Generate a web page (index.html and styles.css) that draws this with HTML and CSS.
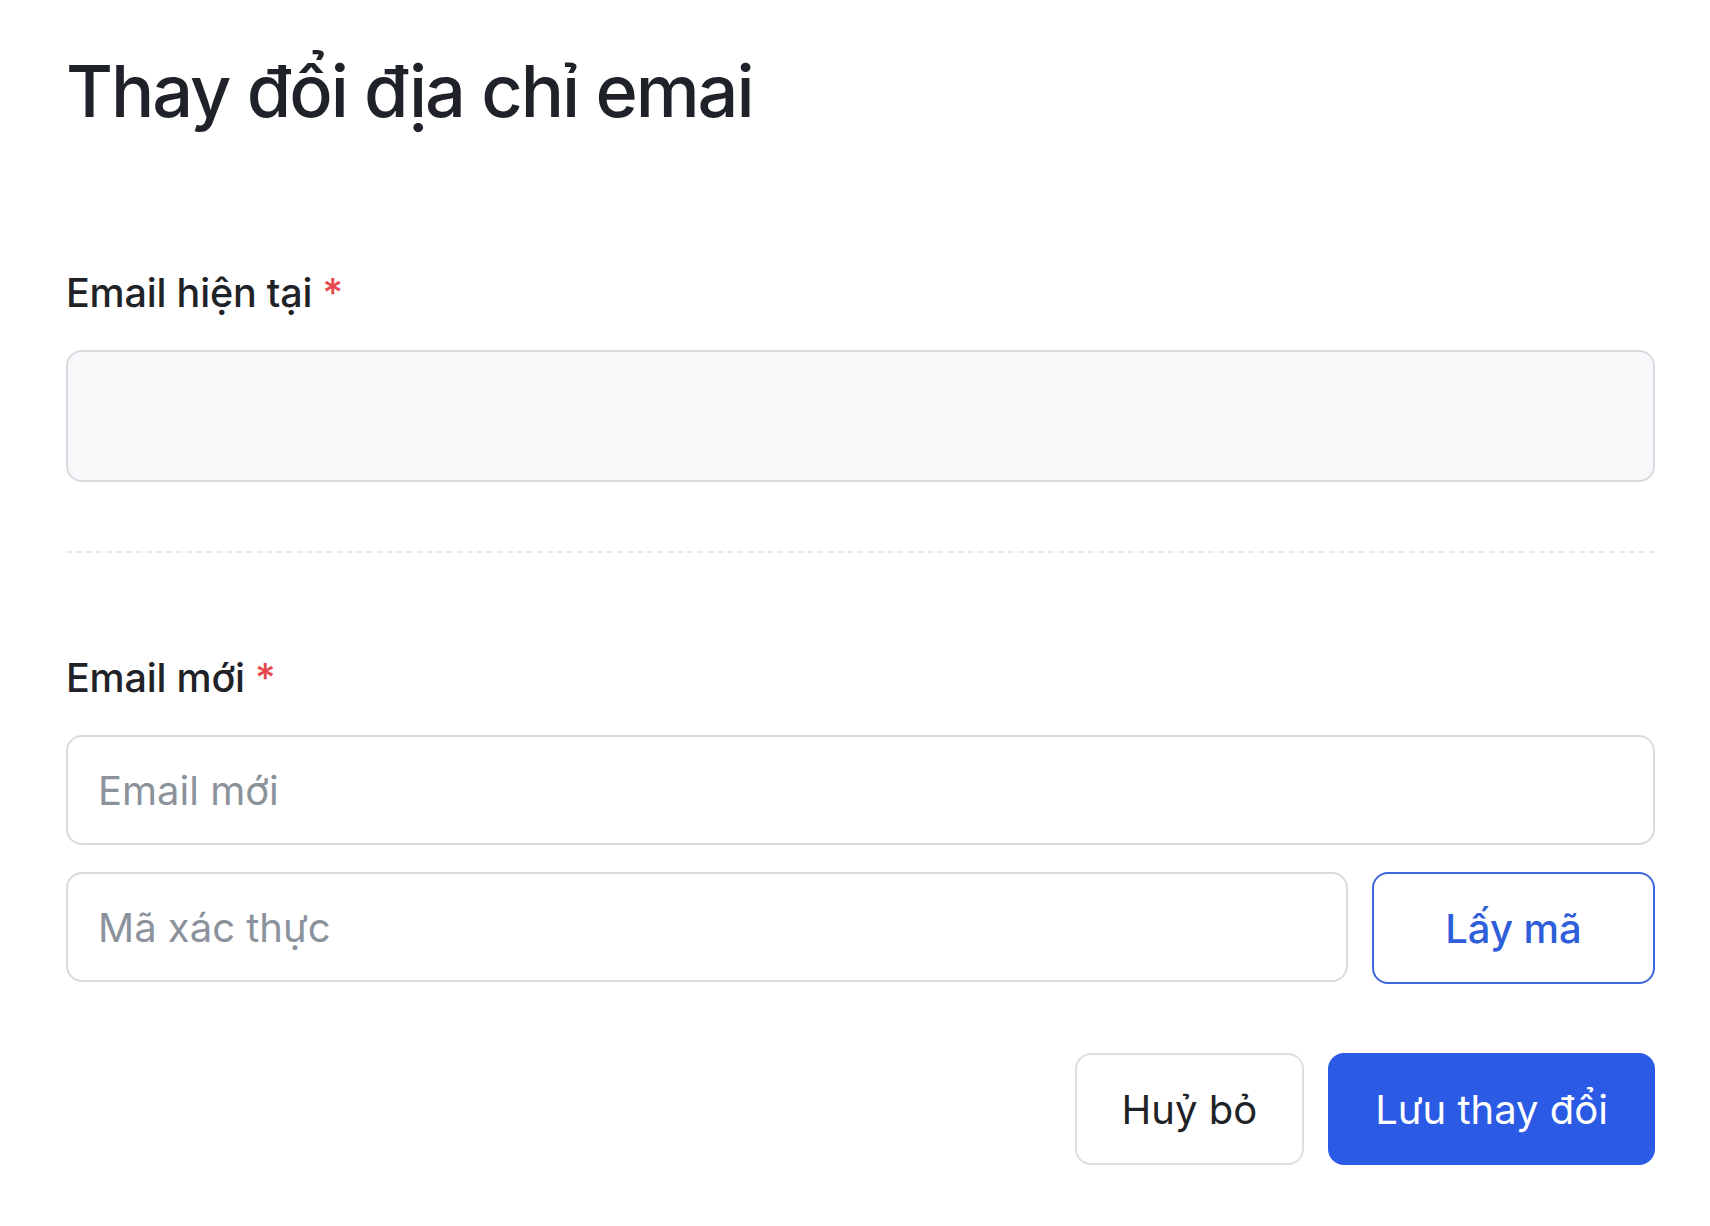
FILE: index.html
```html
<!DOCTYPE html>
<html lang="vi">
<head>
<meta charset="utf-8">
<title>Thay đổi địa chỉ email</title>
<link rel="stylesheet" href="styles.css">
</head>
<body>
<main class="page">
  <h1 class="title">Thay đổi địa chỉ emai</h1>

  <section class="field field-current">
    <label class="label">Email hiện tại <span class="req">*</span></label>
    <input class="input input-readonly" type="text" readonly>
  </section>

  <hr class="divider">

  <section class="field">
    <label class="label">Email mới <span class="req">*</span></label>
    <input class="input" type="text" placeholder="Email mới">
    <div class="code-row">
      <input class="input input-code" type="text" placeholder="Mã xác thực">
      <button class="btn btn-outline" type="button">Lấy mã</button>
    </div>
  </section>

  <div class="actions">
    <button class="btn btn-cancel" type="button">Huỷ bỏ</button>
    <button class="btn btn-primary" type="button">Lưu thay đổi</button>
  </div>
</main>
</body>
</html>
```

FILE: styles.css
```css
* { box-sizing: border-box; }

html, body {
  margin: 0;
  padding: 0;
  background: #ffffff;
}

body {
  font-family: Inter, "Noto Sans", "Liberation Sans", sans-serif;
  color: #1f2328;
}

.page {
  width: 1655px;
  padding: 47px 0 0 66px;
}

.title {
  margin: 0;
  font-size: 72px;
  line-height: 88px;
  font-weight: 500;
  color: #1f2329;
  letter-spacing: -2px;
}

.field {
  display: flex;
  flex-direction: column;
}

.field-current {
  margin-top: 136px;
}

.label {
  display: block;
  font-size: 39.5px;
  line-height: 44px;
  font-weight: 500;
  color: #1f2328;
  margin-bottom: 35px;
  letter-spacing: -0.2px;
}

.req {
  color: #e5484d;
}

.input {
  display: block;
  width: 100%;
  height: 110px;
  border: 2px solid #d8dadf;
  border-radius: 16px;
  background: #ffffff;
  padding: 0 30px;
  font-family: inherit;
  font-size: 40px;
  color: #1f2328;
  outline: none;
}

.input::placeholder {
  color: #8b929b;
}

.input-readonly {
  height: 132px;
  background: #f7f8fa;
}

.divider {
  margin: 69px 0 103px 0;
  border: 0;
  border-top: 2px dashed #e6e8eb;
  height: 0;
}

.code-row {
  display: flex;
  align-items: flex-start;
  gap: 24px;
  margin-top: 27px;
}

.input-code {
  flex: 1;
  width: auto;
}

.btn {
  height: 112px;
  border-radius: 16px;
  font-family: inherit;
  font-size: 40px;
  font-weight: 400;
  cursor: pointer;
  padding: 0 45px;
}

.btn-outline {
  width: 283px;
  background: #ffffff;
  border: 2px solid #3e67dc;
  color: #2e5ed9;
  font-weight: 500;
  padding: 0;
}

.actions {
  display: flex;
  justify-content: flex-end;
  gap: 24px;
  margin-top: 69px;
}

.btn-cancel {
  background: #ffffff;
  border: 2px solid #dcdee2;
  color: #1f2328;
}

.btn-primary {
  background: #2b5ae5;
  border: 2px solid #2b5ae5;
  color: #ffffff;
}
```
